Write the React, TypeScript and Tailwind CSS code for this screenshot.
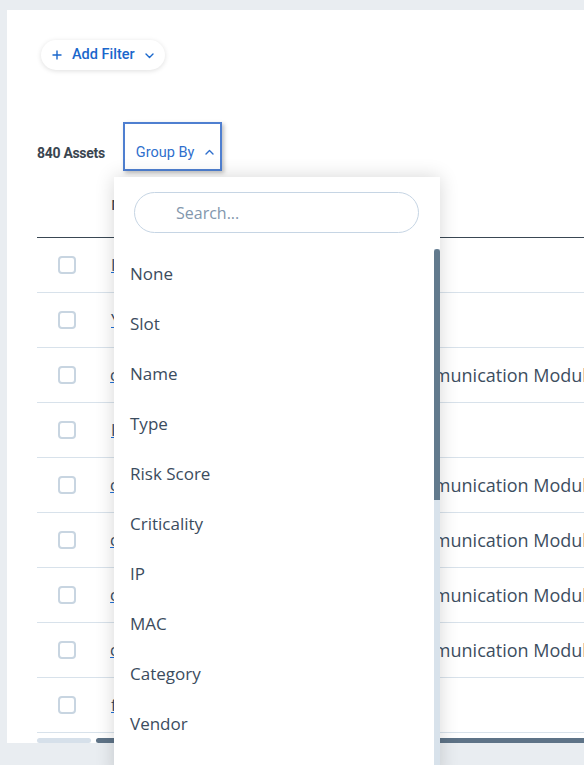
import React from "react";

const rows = [
  { name: "IO-Module-A1", type: "" },
  { name: "Yard-Switch-02", type: "" },
  { name: "comm-module-14", type: "Communication Module" },
  { name: "IO-Rack-07", type: "" },
  { name: "comm-module-22", type: "Communication Module" },
  { name: "comm-module-31", type: "Communication Module" },
  { name: "comm-module-09", type: "Communication Module" },
  { name: "comm-module-45", type: "Communication Module" },
  { name: "fw-edge-03", type: "" },
];

const groupOptions = [
  "None",
  "Slot",
  "Name",
  "Type",
  "Risk Score",
  "Criticality",
  "IP",
  "MAC",
  "Category",
  "Vendor",
  "Model",
];

const barlow = { fontFamily: "Roboto, 'Liberation Sans', sans-serif" };
const openSans = { fontFamily: "'Open Sans', 'Noto Sans', sans-serif" };

function Chevron({ up = false }: { up?: boolean }) {
  return (
    <svg width="9" height="6" viewBox="0 0 9 6" fill="none">
      <path
        d={up ? "M1 5L4.5 1.5L8 5" : "M1 1L4.5 4.5L8 1"}
        stroke="currentColor"
        strokeWidth="1.4"
        strokeLinecap="round"
        strokeLinejoin="round"
      />
    </svg>
  );
}

export default function App() {
  return (
    <div className="relative h-[765px] w-[584px] overflow-hidden bg-[#e9edf1]">
      <div className="pl-[7px] pt-[10px]">
        {/* main panel */}
        <div className="h-[733px] w-[600px] overflow-hidden bg-white px-[30px]" style={barlow}>
          {/* filter bar */}
          <div className="pt-[30px]">
            <button className="ml-[4px] flex h-[30px] w-[124px] items-center rounded-full bg-white pl-[11px] text-[14.5px] font-medium text-[#1a67cc] shadow-[0_1px_5px_rgba(0,0,0,0.13)]">
              <svg width="10" height="10" viewBox="0 0 10 10" fill="none">
                <path d="M5 0.5V9.5M0.5 5H9.5" stroke="currentColor" strokeWidth="1.4" />
              </svg>
              <span className="ml-[10px]">Add Filter</span>
              <span className="ml-[10px] mt-[1px]">
                <Chevron />
              </span>
            </button>
          </div>

          {/* toolbar */}
          <div className="mt-[52px] flex items-end">
            <span className="pb-[7px] text-[14px] font-bold tracking-[-0.3px] text-[#3a4550]">840 Assets</span>
            <button className="ml-[18px] flex h-[49px] w-[99px] items-center border-2 border-[#4f7fd0] pl-[11px] pt-[12px] text-[14.5px] text-[#2f6fcd] shadow-[2px_2px_4px_rgba(0,0,0,0.25)]">
              <span>Group By</span>
              <span className="ml-[11px] -mt-[2px]">
                <Chevron up />
              </span>
            </button>
          </div>

          {/* table */}
          <div className="w-[560px]" style={openSans}>
            <div className="flex h-[67px] items-center border-b border-[#3a4854]">
              <div className="w-[74px]" />
              <div className="text-[15px] font-semibold text-[#3a4854]">Name</div>
            </div>
            {rows.map((r, i) => (
              <div key={i} className="flex h-[55px] items-center border-b border-[#d8e2eb]">
                <div className="w-[74px] pl-[21px]">
                  <div className="h-[18px] w-[18px] rounded-[4px] border-2 border-[#c8d5e1]" />
                </div>
                <div className="w-[290px] text-[16px] text-[#33485e] underline decoration-[#1f6fd6]">
                  {r.name}
                </div>
                <div className="whitespace-nowrap text-[18px] text-[#3d4e5f]">{r.type}</div>
              </div>
            ))}
            {/* horizontal scrollbar */}
            <div className="mt-[5px] flex h-[5px] items-stretch gap-[5px]">
              <div className="w-[54px] rounded-full bg-[#d6e0ea]" />
              <div className="flex-1 rounded-l-full bg-[#5e7387]" />
            </div>
          </div>
        </div>
      </div>

      {/* group-by menu */}
      <div
        className="absolute left-[114px] top-[177px] flex h-[600px] w-[326px] flex-col bg-white shadow-[0_0_18px_rgba(0,0,0,0.16)]"
        style={openSans}
      >
        <div className="px-[20px] pt-[15px]">
          <div className="flex h-[41px] w-[285px] items-center rounded-full border border-[#c6d5e4] pl-[41px] text-[16px] text-[#8397ad]">
            Search...
          </div>
        </div>
        <div className="mt-[16px] flex flex-1">
          <ul className="flex-1">
            {groupOptions.map((o) => (
              <li key={o} className="flex h-[50px] items-center pl-[16px] text-[17px] text-[#3b4c5e]">
                {o}
              </li>
            ))}
          </ul>
          <div className="flex w-[6px] flex-col bg-[#d8e2eb]">
            <div className="h-[251px] rounded-t-full bg-[#627a8d]" />
          </div>
        </div>
      </div>
    </div>
  );
}
